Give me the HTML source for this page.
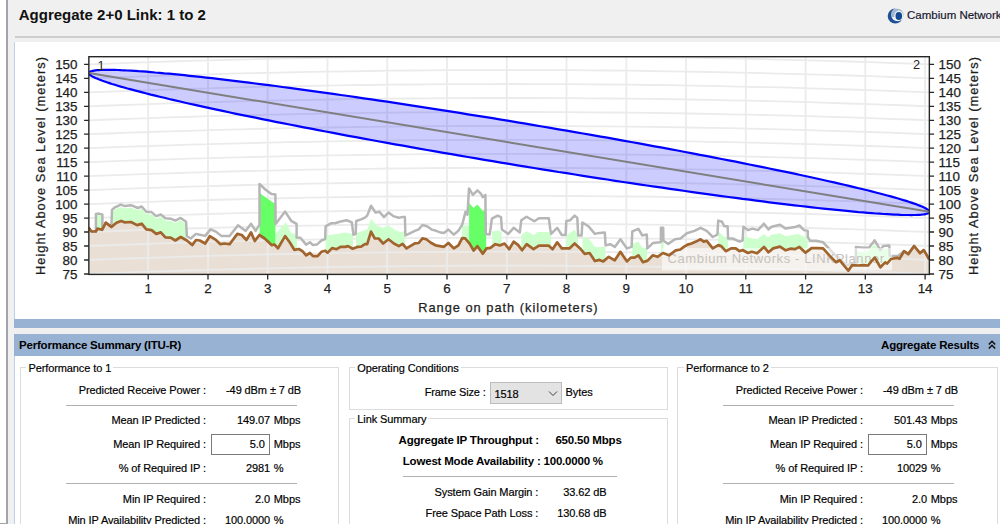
<!DOCTYPE html>
<html><head><meta charset="utf-8"><style>
html,body{margin:0;padding:0;}
body{width:1000px;height:524px;overflow:hidden;position:relative;background:#f0f0f0;font-family:"Liberation Sans",sans-serif;color:#000;}
.t{position:absolute;white-space:pre;-webkit-text-stroke:0.18px #000;}
</style></head><body>
<div style="position:absolute;left:0.00px;top:0.00px;width:6.00px;height:524.00px;background:#ffffff"></div>
<div style="position:absolute;left:6.00px;top:0.00px;width:2.00px;height:524.00px;background:#a3a3ab"></div>
<div style="position:absolute;left:0.00px;top:522.50px;width:6.00px;height:1.50px;background:#a3a3ab"></div>
<div class="t" style="top:6.90px;font-size:15px;line-height:15px;font-weight:700;-webkit-text-stroke:0;color:#111;left:18.75px;">Aggregate 2+0 Link: 1 to 2</div>
<div style="position:absolute;left:15.00px;top:35.80px;width:985.00px;height:2.00px;background:#cdcdcd"></div>
<svg width="24" height="24" viewBox="0 0 24 24" style="position:absolute;left:884px;top:4px"><defs><mask id="cmk"><rect x="0" y="0" width="24" height="24" fill="#fff"/><circle cx="13.6" cy="10.6" r="6.6" fill="#000"/></mask><mask id="cmk2"><rect x="0" y="0" width="24" height="24" fill="#fff"/><ellipse cx="14.8" cy="12" rx="4.6" ry="5.4" fill="#000"/><rect x="0" y="13" width="24" height="11" fill="#000"/></mask></defs><circle cx="13.3" cy="10.9" r="6.2" fill="#9fb3d3" mask="url(#cmk2)"/><circle cx="11.3" cy="12" r="7.6" fill="#1f4f95" mask="url(#cmk)"/><ellipse cx="14.8" cy="12" rx="3.3" ry="4" fill="#134a92"/></svg>
<div class="t" style="top:9.57px;font-size:11.5px;line-height:11.5px;color:#1c1c3c;left:907.00px;">Cambium Networks</div>
<div style="position:absolute;left:14.00px;top:42.00px;width:986.00px;height:277.40px;background:#ffffff"></div>
<div style="position:absolute;left:14.00px;top:42.00px;width:1.00px;height:277.40px;background:#bcd0e8"></div>
<svg width="1000" height="524" viewBox="0 0 1000 524" style="position:absolute;left:0;top:0">
<defs><clipPath id="plot"><rect x="88.85" y="56.7" width="840.55" height="217.7"/></clipPath>
<clipPath id="above"><polygon points="88.5,0.0 929.3,0.0 929.3,259.5 923.8,250.1 920.0,253.1 914.1,246.0 908.3,254.1 904.0,251.2 899.6,258.8 897.0,257.9 891.0,259.0 887.2,263.5 885.2,262.4 880.4,267.3 874.8,257.8 871.9,260.6 868.1,265.5 863.5,265.2 858.2,265.5 852.1,265.2 848.3,270.6 843.7,265.2 839.9,260.3 836.1,262.2 830.0,256.1 823.1,248.4 817.7,248.1 811.6,248.1 805.5,252.7 799.4,246.9 794.8,249.2 790.3,248.7 785.7,250.3 780.0,246.6 773.1,248.4 768.5,252.3 764.0,246.9 757.1,253.3 751.8,251.8 747.9,253.0 742.6,250.0 739.5,251.2 735.7,248.4 731.1,248.4 725.8,251.2 721.2,246.1 718.2,245.1 712.8,248.4 706.7,240.8 703.7,241.6 700.6,239.3 696.0,241.6 691.5,243.5 687.6,244.6 683.8,246.9 680.4,249.5 675.8,250.3 669.0,255.3 662.9,253.0 657.5,256.8 652.9,255.3 647.6,260.6 643.0,262.2 638.4,255.3 634.6,257.6 630.8,257.6 627.0,261.4 620.4,251.8 614.8,260.3 608.7,256.8 603.3,261.4 599.5,259.9 594.9,261.0 589.6,253.0 584.7,253.8 580.1,248.4 574.7,243.5 569.4,248.4 561.8,248.4 557.2,242.3 552.6,249.2 548.8,245.7 538.9,245.7 533.5,249.2 526.6,244.2 522.1,250.3 518.2,245.1 513.7,241.6 509.1,249.2 504.5,243.5 499.9,245.4 495.3,244.2 490.4,247.8 486.6,248.4 482.8,253.7 477.4,246.1 473.6,250.6 469.8,243.8 465.2,238.4 462.2,238.1 458.4,245.3 453.8,248.4 448.4,243.0 443.9,246.8 440.0,246.1 435.5,245.3 430.9,242.7 426.3,239.2 422.5,238.4 418.7,243.0 414.8,243.3 410.3,246.1 406.5,248.4 402.6,243.8 398.8,246.1 393.9,243.5 388.5,239.3 383.2,243.5 378.6,238.5 374.8,238.5 371.0,231.6 367.2,244.2 364.9,244.2 361.1,246.6 357.3,246.9 352.7,248.7 348.1,246.1 345.0,246.9 340.5,246.9 336.6,249.2 332.1,248.1 327.5,252.7 325.2,250.7 321.4,251.8 317.6,256.1 313.0,256.1 309.9,253.0 306.1,255.3 302.7,251.3 298.9,249.0 294.3,249.8 289.7,242.2 285.1,236.1 278.0,248.3 274.4,244.5 271.6,245.1 264.7,238.5 259.4,235.0 254.8,241.0 251.0,232.4 246.4,240.0 241.8,235.0 237.3,233.9 229.6,244.2 224.3,243.5 220.5,244.2 215.1,239.3 209.8,236.2 205.2,243.5 199.8,240.5 196.0,240.0 192.2,245.1 186.9,240.5 180.7,237.0 175.3,240.5 170.7,237.7 165.4,237.4 160.8,232.4 156.2,233.9 151.6,230.1 146.3,229.4 141.7,223.7 137.1,225.1 131.0,222.0 124.5,222.3 121.1,220.9 116.5,222.8 111.4,226.9 105.8,222.7 102.0,229.8 97.5,228.6 95.9,231.5 91.3,231.3 88.5,227.5"/></clipPath></defs>
<g clip-path="url(#plot)">
<polygon fill="#e9dfd5" points="88.5,227.5 91.3,231.3 95.9,231.5 97.5,228.6 102.0,229.8 105.8,222.7 111.4,226.9 116.5,222.8 121.1,220.9 124.5,222.3 131.0,222.0 137.1,225.1 141.7,223.7 146.3,229.4 151.6,230.1 156.2,233.9 160.8,232.4 165.4,237.4 170.7,237.7 175.3,240.5 180.7,237.0 186.9,240.5 192.2,245.1 196.0,240.0 199.8,240.5 205.2,243.5 209.8,236.2 215.1,239.3 220.5,244.2 224.3,243.5 229.6,244.2 237.3,233.9 241.8,235.0 246.4,240.0 251.0,232.4 254.8,241.0 259.4,235.0 264.7,238.5 271.6,245.1 274.4,244.5 278.0,248.3 285.1,236.1 289.7,242.2 294.3,249.8 298.9,249.0 302.7,251.3 306.1,255.3 309.9,253.0 313.0,256.1 317.6,256.1 321.4,251.8 325.2,250.7 327.5,252.7 332.1,248.1 336.6,249.2 340.5,246.9 345.0,246.9 348.1,246.1 352.7,248.7 357.3,246.9 361.1,246.6 364.9,244.2 367.2,244.2 371.0,231.6 374.8,238.5 378.6,238.5 383.2,243.5 388.5,239.3 393.9,243.5 398.8,246.1 402.6,243.8 406.5,248.4 410.3,246.1 414.8,243.3 418.7,243.0 422.5,238.4 426.3,239.2 430.9,242.7 435.5,245.3 440.0,246.1 443.9,246.8 448.4,243.0 453.8,248.4 458.4,245.3 462.2,238.1 465.2,238.4 469.8,243.8 473.6,250.6 477.4,246.1 482.8,253.7 486.6,248.4 490.4,247.8 495.3,244.2 499.9,245.4 504.5,243.5 509.1,249.2 513.7,241.6 518.2,245.1 522.1,250.3 526.6,244.2 533.5,249.2 538.9,245.7 548.8,245.7 552.6,249.2 557.2,242.3 561.8,248.4 569.4,248.4 574.7,243.5 580.1,248.4 584.7,253.8 589.6,253.0 594.9,261.0 599.5,259.9 603.3,261.4 608.7,256.8 614.8,260.3 620.4,251.8 627.0,261.4 630.8,257.6 634.6,257.6 638.4,255.3 643.0,262.2 647.6,260.6 652.9,255.3 657.5,256.8 662.9,253.0 669.0,255.3 675.8,250.3 680.4,249.5 683.8,246.9 687.6,244.6 691.5,243.5 696.0,241.6 700.6,239.3 703.7,241.6 706.7,240.8 712.8,248.4 718.2,245.1 721.2,246.1 725.8,251.2 731.1,248.4 735.7,248.4 739.5,251.2 742.6,250.0 747.9,253.0 751.8,251.8 757.1,253.3 764.0,246.9 768.5,252.3 773.1,248.4 780.0,246.6 785.7,250.3 790.3,248.7 794.8,249.2 799.4,246.9 805.5,252.7 811.6,248.1 817.7,248.1 823.1,248.4 830.0,256.1 836.1,262.2 839.9,260.3 843.7,265.2 848.3,270.6 852.1,265.2 858.2,265.5 863.5,265.2 868.1,265.5 871.9,260.6 874.8,257.8 880.4,267.3 885.2,262.4 887.2,263.5 891.0,259.0 897.0,257.9 899.6,258.8 904.0,251.2 908.3,254.1 914.1,246.0 920.0,253.1 923.8,250.1 929.3,259.5 929.3,276.0 88.5,276.0"/>
<path d="M148.2,56V274 M208.0,56V274 M267.7,56V274 M327.5,56V274 M387.2,56V274 M447.0,56V274 M506.8,56V274 M566.5,56V274 M626.3,56V274 M686.0,56V274 M745.8,56V274 M805.6,56V274 M865.3,56V274 M925.1,56V274 M88.8,273.9 L108.9,273.2 L128.9,272.4 L148.9,271.7 L168.9,271.1 L188.9,270.5 L208.9,269.9 L228.9,269.3 L249.0,268.8 L269.0,268.4 L289.0,267.9 L309.0,267.5 L329.0,267.2 L349.0,266.9 L369.0,266.6 L389.0,266.3 L409.1,266.1 L429.1,265.9 L449.1,265.8 L469.1,265.7 L489.1,265.7 L509.1,265.7 L529.1,265.7 L549.2,265.7 L569.2,265.8 L589.2,266.0 L609.2,266.1 L629.2,266.3 L649.2,266.6 L669.2,266.9 L689.2,267.2 L709.3,267.5 L729.3,267.9 L749.3,268.4 L769.3,268.8 L789.3,269.3 L809.3,269.9 L829.3,270.5 L849.3,271.1 L869.4,271.7 L889.4,272.4 L909.4,273.2 L929.4,274.0 M88.8,260.0 L108.9,259.2 L128.9,258.5 L148.9,257.8 L168.9,257.1 L188.9,256.5 L208.9,255.9 L228.9,255.4 L249.0,254.9 L269.0,254.4 L289.0,254.0 L309.0,253.6 L329.0,253.2 L349.0,252.9 L369.0,252.6 L389.0,252.4 L409.1,252.1 L429.1,252.0 L449.1,251.8 L469.1,251.8 L489.1,251.7 L509.1,251.7 L529.1,251.7 L549.2,251.8 L569.2,251.9 L589.2,252.0 L609.2,252.2 L629.2,252.4 L649.2,252.6 L669.2,252.9 L689.2,253.2 L709.3,253.6 L729.3,254.0 L749.3,254.4 L769.3,254.9 L789.3,255.4 L809.3,255.9 L829.3,256.5 L849.3,257.1 L869.4,257.8 L889.4,258.5 L909.4,259.2 L929.4,260.0 M88.8,246.0 L108.9,245.2 L128.9,244.5 L148.9,243.8 L168.9,243.1 L188.9,242.5 L208.9,241.9 L228.9,241.4 L249.0,240.9 L269.0,240.4 L289.0,240.0 L309.0,239.6 L329.0,239.2 L349.0,238.9 L369.0,238.6 L389.0,238.4 L409.1,238.2 L429.1,238.0 L449.1,237.9 L469.1,237.8 L489.1,237.7 L509.1,237.7 L529.1,237.7 L549.2,237.8 L569.2,237.9 L589.2,238.0 L609.2,238.2 L629.2,238.4 L649.2,238.6 L669.2,238.9 L689.2,239.2 L709.3,239.6 L729.3,240.0 L749.3,240.4 L769.3,240.9 L789.3,241.4 L809.3,241.9 L829.3,242.5 L849.3,243.2 L869.4,243.8 L889.4,244.5 L909.4,245.2 L929.4,246.0 M88.8,232.0 L108.9,231.3 L128.9,230.5 L148.9,229.8 L168.9,229.2 L188.9,228.5 L208.9,228.0 L228.9,227.4 L249.0,226.9 L269.0,226.4 L289.0,226.0 L309.0,225.6 L329.0,225.3 L349.0,224.9 L369.0,224.7 L389.0,224.4 L409.1,224.2 L429.1,224.0 L449.1,223.9 L469.1,223.8 L489.1,223.8 L509.1,223.7 L529.1,223.8 L549.2,223.8 L569.2,223.9 L589.2,224.0 L609.2,224.2 L629.2,224.4 L649.2,224.7 L669.2,224.9 L689.2,225.3 L709.3,225.6 L729.3,226.0 L749.3,226.5 L769.3,226.9 L789.3,227.4 L809.3,228.0 L829.3,228.6 L849.3,229.2 L869.4,229.8 L889.4,230.5 L909.4,231.3 L929.4,232.0 M88.8,218.1 L108.9,217.3 L128.9,216.6 L148.9,215.9 L168.9,215.2 L188.9,214.6 L208.9,214.0 L228.9,213.4 L249.0,212.9 L269.0,212.5 L289.0,212.0 L309.0,211.6 L329.0,211.3 L349.0,211.0 L369.0,210.7 L389.0,210.4 L409.1,210.2 L429.1,210.1 L449.1,209.9 L469.1,209.8 L489.1,209.8 L509.1,209.8 L529.1,209.8 L549.2,209.8 L569.2,209.9 L589.2,210.1 L609.2,210.2 L629.2,210.4 L649.2,210.7 L669.2,211.0 L689.2,211.3 L709.3,211.7 L729.3,212.0 L749.3,212.5 L769.3,213.0 L789.3,213.5 L809.3,214.0 L829.3,214.6 L849.3,215.2 L869.4,215.9 L889.4,216.6 L909.4,217.3 L929.4,218.1 M88.8,204.1 L108.9,203.3 L128.9,202.6 L148.9,201.9 L168.9,201.2 L188.9,200.6 L208.9,200.0 L228.9,199.5 L249.0,199.0 L269.0,198.5 L289.0,198.1 L309.0,197.7 L329.0,197.3 L349.0,197.0 L369.0,196.7 L389.0,196.5 L409.1,196.3 L429.1,196.1 L449.1,196.0 L469.1,195.9 L489.1,195.8 L509.1,195.8 L529.1,195.8 L549.2,195.9 L569.2,196.0 L589.2,196.1 L609.2,196.3 L629.2,196.5 L649.2,196.7 L669.2,197.0 L689.2,197.3 L709.3,197.7 L729.3,198.1 L749.3,198.5 L769.3,199.0 L789.3,199.5 L809.3,200.0 L829.3,200.6 L849.3,201.2 L869.4,201.9 L889.4,202.6 L909.4,203.3 L929.4,204.1 M88.8,190.1 L108.9,189.3 L128.9,188.6 L148.9,187.9 L168.9,187.3 L188.9,186.6 L208.9,186.1 L228.9,185.5 L249.0,185.0 L269.0,184.5 L289.0,184.1 L309.0,183.7 L329.0,183.3 L349.0,183.0 L369.0,182.7 L389.0,182.5 L409.1,182.3 L429.1,182.1 L449.1,182.0 L469.1,181.9 L489.1,181.8 L509.1,181.8 L529.1,181.8 L549.2,181.9 L569.2,182.0 L589.2,182.1 L609.2,182.3 L629.2,182.5 L649.2,182.8 L669.2,183.0 L689.2,183.4 L709.3,183.7 L729.3,184.1 L749.3,184.5 L769.3,185.0 L789.3,185.5 L809.3,186.1 L829.3,186.6 L849.3,187.3 L869.4,187.9 L889.4,188.6 L909.4,189.4 L929.4,190.1 M88.8,176.1 L108.9,175.4 L128.9,174.6 L148.9,173.9 L168.9,173.3 L188.9,172.7 L208.9,172.1 L228.9,171.5 L249.0,171.0 L269.0,170.6 L289.0,170.1 L309.0,169.7 L329.0,169.4 L349.0,169.1 L369.0,168.8 L389.0,168.5 L409.1,168.3 L429.1,168.2 L449.1,168.0 L469.1,167.9 L489.1,167.9 L509.1,167.9 L529.1,167.9 L549.2,167.9 L569.2,168.0 L589.2,168.2 L609.2,168.3 L629.2,168.5 L649.2,168.8 L669.2,169.1 L689.2,169.4 L709.3,169.7 L729.3,170.1 L749.3,170.6 L769.3,171.0 L789.3,171.6 L809.3,172.1 L829.3,172.7 L849.3,173.3 L869.4,174.0 L889.4,174.7 L909.4,175.4 L929.4,176.2 M88.8,162.2 L108.9,161.4 L128.9,160.7 L148.9,160.0 L168.9,159.3 L188.9,158.7 L208.9,158.1 L228.9,157.6 L249.0,157.1 L269.0,156.6 L289.0,156.2 L309.0,155.8 L329.0,155.4 L349.0,155.1 L369.0,154.8 L389.0,154.6 L409.1,154.4 L429.1,154.2 L449.1,154.1 L469.1,154.0 L489.1,153.9 L509.1,153.9 L529.1,153.9 L549.2,154.0 L569.2,154.1 L589.2,154.2 L609.2,154.4 L629.2,154.6 L649.2,154.8 L669.2,155.1 L689.2,155.4 L709.3,155.8 L729.3,156.2 L749.3,156.6 L769.3,157.1 L789.3,157.6 L809.3,158.1 L829.3,158.7 L849.3,159.3 L869.4,160.0 L889.4,160.7 L909.4,161.4 L929.4,162.2 M88.8,148.2 L108.9,147.4 L128.9,146.7 L148.9,146.0 L168.9,145.3 L188.9,144.7 L208.9,144.1 L228.9,143.6 L249.0,143.1 L269.0,142.6 L289.0,142.2 L309.0,141.8 L329.0,141.4 L349.0,141.1 L369.0,140.8 L389.0,140.6 L409.1,140.4 L429.1,140.2 L449.1,140.1 L469.1,140.0 L489.1,139.9 L509.1,139.9 L529.1,139.9 L549.2,140.0 L569.2,140.1 L589.2,140.2 L609.2,140.4 L629.2,140.6 L649.2,140.8 L669.2,141.1 L689.2,141.4 L709.3,141.8 L729.3,142.2 L749.3,142.6 L769.3,143.1 L789.3,143.6 L809.3,144.2 L829.3,144.7 L849.3,145.4 L869.4,146.0 L889.4,146.7 L909.4,147.4 L929.4,148.2 M88.8,134.2 L108.9,133.5 L128.9,132.7 L148.9,132.0 L168.9,131.4 L188.9,130.8 L208.9,130.2 L228.9,129.6 L249.0,129.1 L269.0,128.7 L289.0,128.2 L309.0,127.8 L329.0,127.5 L349.0,127.2 L369.0,126.9 L389.0,126.6 L409.1,126.4 L429.1,126.2 L449.1,126.1 L469.1,126.0 L489.1,126.0 L509.1,126.0 L529.1,126.0 L549.2,126.0 L569.2,126.1 L589.2,126.3 L609.2,126.4 L629.2,126.6 L649.2,126.9 L669.2,127.2 L689.2,127.5 L709.3,127.8 L729.3,128.2 L749.3,128.7 L769.3,129.1 L789.3,129.6 L809.3,130.2 L829.3,130.8 L849.3,131.4 L869.4,132.0 L889.4,132.7 L909.4,133.5 L929.4,134.2 M88.8,120.3 L108.9,119.5 L128.9,118.8 L148.9,118.1 L168.9,117.4 L188.9,116.8 L208.9,116.2 L228.9,115.7 L249.0,115.2 L269.0,114.7 L289.0,114.3 L309.0,113.9 L329.0,113.5 L349.0,113.2 L369.0,112.9 L389.0,112.7 L409.1,112.4 L429.1,112.3 L449.1,112.1 L469.1,112.1 L489.1,112.0 L509.1,112.0 L529.1,112.0 L549.2,112.1 L569.2,112.2 L589.2,112.3 L609.2,112.5 L629.2,112.7 L649.2,112.9 L669.2,113.2 L689.2,113.5 L709.3,113.9 L729.3,114.3 L749.3,114.7 L769.3,115.2 L789.3,115.7 L809.3,116.2 L829.3,116.8 L849.3,117.4 L869.4,118.1 L889.4,118.8 L909.4,119.5 L929.4,120.3 M88.8,106.3 L108.9,105.5 L128.9,104.8 L148.9,104.1 L168.9,103.4 L188.9,102.8 L208.9,102.2 L228.9,101.7 L249.0,101.2 L269.0,100.7 L289.0,100.3 L309.0,99.9 L329.0,99.5 L349.0,99.2 L369.0,98.9 L389.0,98.7 L409.1,98.5 L429.1,98.3 L449.1,98.2 L469.1,98.1 L489.1,98.0 L509.1,98.0 L529.1,98.0 L549.2,98.1 L569.2,98.2 L589.2,98.3 L609.2,98.5 L629.2,98.7 L649.2,98.9 L669.2,99.2 L689.2,99.5 L709.3,99.9 L729.3,100.3 L749.3,100.7 L769.3,101.2 L789.3,101.7 L809.3,102.2 L829.3,102.8 L849.3,103.5 L869.4,104.1 L889.4,104.8 L909.4,105.5 L929.4,106.3 M88.8,92.3 L108.9,91.6 L128.9,90.8 L148.9,90.1 L168.9,89.5 L188.9,88.8 L208.9,88.3 L228.9,87.7 L249.0,87.2 L269.0,86.7 L289.0,86.3 L309.0,85.9 L329.0,85.6 L349.0,85.2 L369.0,85.0 L389.0,84.7 L409.1,84.5 L429.1,84.3 L449.1,84.2 L469.1,84.1 L489.1,84.1 L509.1,84.0 L529.1,84.1 L549.2,84.1 L569.2,84.2 L589.2,84.3 L609.2,84.5 L629.2,84.7 L649.2,85.0 L669.2,85.2 L689.2,85.6 L709.3,85.9 L729.3,86.3 L749.3,86.8 L769.3,87.2 L789.3,87.7 L809.3,88.3 L829.3,88.9 L849.3,89.5 L869.4,90.1 L889.4,90.8 L909.4,91.6 L929.4,92.3 M88.8,78.4 L108.9,77.6 L128.9,76.9 L148.9,76.2 L168.9,75.5 L188.9,74.9 L208.9,74.3 L228.9,73.7 L249.0,73.2 L269.0,72.8 L289.0,72.3 L309.0,71.9 L329.0,71.6 L349.0,71.3 L369.0,71.0 L389.0,70.7 L409.1,70.5 L429.1,70.4 L449.1,70.2 L469.1,70.1 L489.1,70.1 L509.1,70.1 L529.1,70.1 L549.2,70.1 L569.2,70.2 L589.2,70.4 L609.2,70.5 L629.2,70.7 L649.2,71.0 L669.2,71.3 L689.2,71.6 L709.3,72.0 L729.3,72.3 L749.3,72.8 L769.3,73.3 L789.3,73.8 L809.3,74.3 L829.3,74.9 L849.3,75.5 L869.4,76.2 L889.4,76.9 L909.4,77.6 L929.4,78.4 M88.8,64.4 L108.9,63.6 L128.9,62.9 L148.9,62.2 L168.9,61.5 L188.9,60.9 L208.9,60.3 L228.9,59.8 L249.0,59.3 L269.0,58.8 L289.0,58.4 L309.0,58.0 L329.0,57.6 L349.0,57.3 L369.0,57.0 L389.0,56.8 L409.1,56.6 L429.1,56.4 L449.1,56.3 L469.1,56.2 L489.1,56.1 L509.1,56.1 L529.1,56.1 L549.2,56.2 L569.2,56.3 L589.2,56.4 L609.2,56.6 L629.2,56.8 L649.2,57.0 L669.2,57.3 L689.2,57.6 L709.3,58.0 L729.3,58.4 L749.3,58.8 L769.3,59.3 L789.3,59.8 L809.3,60.3 L829.3,60.9 L849.3,61.5 L869.4,62.2 L889.4,62.9 L909.4,63.6 L929.4,64.4 M88.8,50.4 L108.9,49.6 L128.9,48.9 L148.9,48.2 L168.9,47.6 L188.9,46.9 L208.9,46.4 L228.9,45.8 L249.0,45.3 L269.0,44.8 L289.0,44.4 L309.0,44.0 L329.0,43.6 L349.0,43.3 L369.0,43.0 L389.0,42.8 L409.1,42.6 L429.1,42.4 L449.1,42.3 L469.1,42.2 L489.1,42.1 L509.1,42.1 L529.1,42.1 L549.2,42.2 L569.2,42.3 L589.2,42.4 L609.2,42.6 L629.2,42.8 L649.2,43.1 L669.2,43.3 L689.2,43.7 L709.3,44.0 L729.3,44.4 L749.3,44.8 L769.3,45.3 L789.3,45.8 L809.3,46.4 L829.3,46.9 L849.3,47.6 L869.4,48.2 L889.4,48.9 L909.4,49.7 L929.4,50.4" fill="none" stroke="#ebebeb" stroke-width="1.8"/>
<g clip-path="url(#above)">
<polygon fill="#ccffcc" points="95.9,214.9 98.6,214.6 102.4,215.5 102.4,275.0 95.9,275.0"/>
<polygon fill="#ccffcc" points="112.3,211.9 115.0,209.6 120.7,206.9 124.9,208.4 131.0,207.5 137.9,210.3 141.7,208.8 146.3,214.1 151.6,214.4 156.2,218.4 160.8,216.8 165.4,220.5 170.7,221.0 175.3,222.9 180.7,220.2 186.0,223.9 186.0,275.0 112.3,275.0"/>
<polygon fill="#ccffcc" points="275.6,233.8 285.9,222.3 291.2,233.0 297.0,234.5 297.0,275.0 275.6,275.0"/>
<polygon fill="#ccffcc" points="325.6,236.0 331.3,234.7 345.8,232.4 353.0,233.9 353.0,275.0 325.6,275.0"/>
<polygon fill="#ccffcc" points="355.9,233.2 367.2,229.4 371.0,218.7 376.3,225.5 383.2,227.8 388.5,225.5 395.0,230.0 401.1,232.3 405.2,230.5 405.2,275.0 355.9,275.0"/>
<polygon fill="#ccffcc" points="462.0,225.5 469.0,225.5 469.0,275.0 462.0,275.0"/>
<polygon fill="#ccffcc" points="492.1,231.6 499.2,230.4 501.7,232.4 501.7,275.0 492.1,275.0"/>
<polygon fill="#ccffcc" points="521.3,235.0 526.6,231.3 534.3,235.0 537.3,232.1 548.8,232.1 551.1,235.5 551.1,275.0 521.3,275.0"/>
<polygon fill="#ccffcc" points="566.3,235.5 574.7,229.8 578.0,235.5 578.0,275.0 566.3,275.0"/>
<polygon fill="#ccffcc" points="582.6,237.0 589.6,239.6 594.9,246.9 605.4,246.9 605.4,275.0 582.6,275.0"/>
<polygon fill="#ccffcc" points="632.3,243.9 638.4,241.6 642.3,247.7 647.2,247.7 647.2,275.0 632.3,275.0"/>
<polygon fill="#ccffcc" points="661.0,239.6 663.6,240.8 663.6,275.0 661.0,275.0"/>
<polygon fill="#ccffcc" points="718.4,231.3 724.3,237.0 728.0,237.0 728.0,275.0 718.4,275.0"/>
<polygon fill="#ccffcc" points="743.4,236.5 757.1,239.3 764.0,233.9 767.8,237.7 771.6,234.7 780.0,233.2 785.7,236.2 797.9,233.9 807.6,237.7 807.6,275.0 743.4,275.0"/>
<polygon fill="#ccffcc" points="856.0,251.5 866.6,252.3 872.7,246.1 875.0,245.4 880.3,252.0 883.3,249.0 889.5,249.0 889.5,275.0 856.0,275.0"/>
<polygon fill="#66ff66" points="259.6,193.0 272.9,202.5 275.4,203.2 275.4,275.0 259.6,275.0"/>
<polygon fill="#66ff66" points="469.1,203.0 473.6,207.9 477.4,204.5 482.8,211.0 486.2,209.4 486.2,275.0 469.1,275.0"/>
</g>
<polyline fill="none" stroke="#b6b6b6" stroke-width="2.5" stroke-linejoin="round" points="88.5,227.5 91.3,231.3 95.9,231.5 95.9,214.1 98.6,213.6 102.4,214.4 102.4,229.8 105.8,222.7 111.4,226.9 112.0,209.9 115.0,207.3 120.7,204.6 124.9,206.1 131.0,205.2 137.9,208.0 141.7,206.5 146.3,211.8 151.6,212.1 156.2,216.1 160.8,214.5 165.4,218.2 170.7,218.7 175.3,220.6 180.7,217.9 186.1,221.7 186.9,236.2 190.7,238.5 196.0,233.9 199.8,234.7 205.2,235.9 210.5,229.4 215.9,231.6 221.2,235.9 229.6,235.9 238.0,225.2 245.6,230.9 251.0,223.7 255.6,230.9 259.5,224.8 259.5,183.9 265.3,189.5 271.4,194.1 275.4,194.5 275.6,223.9 285.1,211.6 291.2,220.8 296.6,223.9 296.6,237.6 300.4,237.7 306.1,244.6 309.9,242.3 313.0,245.1 316.8,244.6 321.4,240.5 325.2,239.0 325.6,226.3 331.3,223.2 335.1,223.2 339.7,221.7 346.6,220.2 351.9,222.5 353.4,234.7 355.7,233.9 356.2,221.0 361.1,219.4 364.9,217.6 367.2,215.6 371.0,205.7 375.6,212.6 379.4,211.8 384.0,217.1 388.5,212.6 393.9,216.4 398.8,217.8 401.9,217.1 404.9,217.1 405.4,235.4 410.3,233.1 414.8,230.8 418.7,229.3 422.5,225.0 427.1,226.2 431.6,229.6 436.2,230.8 440.8,232.6 443.9,233.1 448.4,229.6 453.8,234.6 458.4,230.8 462.2,224.7 465.5,211.7 467.5,214.8 469.0,188.4 472.9,194.9 477.4,190.3 481.3,194.2 482.8,197.2 485.4,194.9 485.8,233.9 489.7,234.6 491.9,218.6 497.6,215.6 501.0,217.1 501.9,229.4 508.3,233.9 513.7,227.8 519.8,232.4 521.3,220.2 526.6,216.7 534.3,221.3 538.9,218.2 548.8,218.2 550.3,229.4 551.1,233.9 557.2,227.8 561.8,235.0 565.6,235.0 566.3,221.0 570.2,220.2 574.7,215.6 577.3,217.9 578.2,235.5 581.6,235.5 582.4,222.5 588.4,226.3 594.9,233.9 599.5,232.9 604.8,232.4 605.6,245.4 610.2,244.2 614.8,246.9 620.4,239.3 627.0,248.4 631.6,246.9 632.3,231.3 638.4,228.9 642.3,235.5 646.8,234.4 647.3,248.4 652.9,243.1 659.8,242.3 660.9,242.0 660.9,227.8 663.2,227.8 663.4,240.8 668.2,243.9 675.1,239.3 680.4,238.5 686.9,233.2 694.5,230.9 700.6,227.8 706.7,230.9 712.8,237.0 717.4,234.7 718.2,220.6 722.0,221.7 724.3,226.3 727.6,226.3 728.1,238.5 732.7,238.5 739.5,241.6 742.6,240.5 743.4,226.8 747.9,230.1 752.5,228.6 757.9,230.1 764.0,223.7 768.5,229.4 771.6,226.8 780.0,224.8 785.7,228.6 790.3,227.8 794.8,227.1 799.4,225.5 804.0,230.1 807.8,230.9 807.8,237.0 810.1,240.8 816.2,240.8 823.1,242.3 836.1,256.1 846.8,265.2 851.3,263.7 855.9,263.7 855.9,246.9 863.5,247.7 868.9,247.7 874.7,240.3 880.3,250.2 883.3,245.9 889.3,245.5 889.7,256.0 898.0,256.0 904.0,251.2 908.3,254.1 914.1,246.0 920.0,253.1 923.8,250.1 929.3,259.5"/>
<rect x="662" y="248" width="230" height="22.4" fill="#ffffff" fill-opacity="0.55"/>
<text x="667.5" y="262.8" font-family="Liberation Sans" font-size="13" letter-spacing="0.62" fill="#c6c2be">Cambium Networks - LINKPlanner</text>
<polygon points="88.8,73.1 88.9,72.7 89.2,72.3 89.6,72.0 90.1,71.6 90.9,71.3 91.8,71.1 92.8,70.8 94.0,70.6 95.4,70.4 96.9,70.2 98.6,70.1 100.5,70.0 102.5,69.9 104.6,69.9 106.9,69.8 109.4,69.9 112.0,69.9 114.8,69.9 117.8,70.0 120.8,70.2 124.1,70.3 127.5,70.5 131.0,70.7 134.7,70.9 138.5,71.2 142.4,71.4 146.5,71.7 150.8,72.1 155.2,72.5 159.7,72.8 164.3,73.3 169.1,73.7 174.0,74.2 179.1,74.7 184.2,75.2 189.5,75.8 195.0,76.3 200.5,76.9 206.2,77.6 211.9,78.2 217.8,78.9 223.8,79.6 230.0,80.3 236.2,81.1 242.5,81.8 248.9,82.6 255.5,83.5 262.1,84.3 268.8,85.2 275.6,86.0 282.5,87.0 289.5,87.9 296.6,88.8 303.8,89.8 311.0,90.8 318.3,91.8 325.7,92.8 333.2,93.9 340.7,95.0 348.3,96.0 355.9,97.2 363.7,98.3 371.4,99.4 379.3,100.6 387.1,101.7 395.0,102.9 403.0,104.1 411.0,105.4 419.1,106.6 427.1,107.8 435.2,109.1 443.4,110.4 451.5,111.7 459.7,112.9 467.9,114.3 476.2,115.6 484.4,116.9 492.6,118.2 500.9,119.6 509.1,120.9 517.4,122.3 525.6,123.7 533.9,125.1 542.1,126.5 550.3,127.9 558.5,129.3 566.7,130.7 574.9,132.1 583.0,133.5 591.1,134.9 599.2,136.3 607.2,137.7 615.2,139.2 623.2,140.6 631.1,142.0 639.0,143.4 646.8,144.9 654.6,146.3 662.3,147.7 670.0,149.1 677.5,150.5 685.1,152.0 692.5,153.4 699.9,154.8 707.2,156.2 714.5,157.6 721.6,159.0 728.7,160.4 735.7,161.7 742.6,163.1 749.4,164.5 756.2,165.8 762.8,167.2 769.3,168.5 775.7,169.8 782.1,171.1 788.3,172.4 794.4,173.7 800.4,175.0 806.3,176.3 812.1,177.5 817.7,178.8 823.3,180.0 828.7,181.2 834.0,182.4 839.2,183.6 844.2,184.8 849.1,185.9 853.9,187.1 858.6,188.2 863.1,189.3 867.5,190.3 871.7,191.4 875.8,192.5 879.8,193.5 883.6,194.5 887.3,195.5 890.8,196.4 894.2,197.4 897.4,198.3 900.5,199.2 903.4,200.1 906.2,200.9 908.8,201.8 911.3,202.6 913.6,203.4 915.8,204.1 917.8,204.9 919.6,205.6 921.3,206.3 922.9,206.9 924.2,207.6 925.4,208.2 926.5,208.8 927.4,209.4 928.1,209.9 928.7,210.4 929.1,210.9 929.3,211.4 929.4,211.8 929.4,211.8 929.3,212.2 929.1,212.6 928.7,212.9 928.1,213.3 927.4,213.6 926.5,213.8 925.4,214.1 924.2,214.3 922.9,214.5 921.3,214.7 919.6,214.8 917.8,214.9 915.8,215.0 913.6,215.0 911.3,215.1 908.8,215.0 906.2,215.0 903.4,215.0 900.5,214.9 897.4,214.7 894.2,214.6 890.8,214.4 887.3,214.2 883.6,214.0 879.8,213.7 875.8,213.5 871.7,213.2 867.5,212.8 863.1,212.4 858.6,212.1 853.9,211.6 849.1,211.2 844.2,210.7 839.2,210.2 834.0,209.7 828.7,209.1 823.3,208.6 817.7,208.0 812.1,207.3 806.3,206.7 800.4,206.0 794.4,205.3 788.3,204.6 782.1,203.8 775.7,203.1 769.3,202.3 762.8,201.4 756.2,200.6 749.4,199.7 742.6,198.9 735.7,197.9 728.7,197.0 721.6,196.1 714.5,195.1 707.2,194.1 699.9,193.1 692.5,192.1 685.1,191.0 677.5,189.9 670.0,188.9 662.3,187.7 654.6,186.6 646.8,185.5 639.0,184.3 631.1,183.2 623.2,182.0 615.2,180.8 607.2,179.5 599.2,178.3 591.1,177.1 583.0,175.8 574.9,174.5 566.7,173.2 558.5,172.0 550.3,170.6 542.1,169.3 533.9,168.0 525.6,166.7 517.4,165.3 509.1,163.9 500.9,162.6 492.6,161.2 484.4,159.8 476.2,158.4 467.9,157.0 459.7,155.6 451.5,154.2 443.4,152.8 435.2,151.4 427.1,150.0 419.1,148.6 411.0,147.2 403.0,145.7 395.0,144.3 387.1,142.9 379.3,141.5 371.4,140.0 363.7,138.6 355.9,137.2 348.3,135.8 340.7,134.4 333.2,132.9 325.7,131.5 318.3,130.1 311.0,128.7 303.8,127.3 296.6,125.9 289.5,124.5 282.5,123.2 275.6,121.8 268.8,120.4 262.1,119.1 255.5,117.7 248.9,116.4 242.5,115.1 236.2,113.8 230.0,112.5 223.8,111.2 217.8,109.9 211.9,108.6 206.2,107.4 200.5,106.1 195.0,104.9 189.5,103.7 184.2,102.5 179.1,101.3 174.0,100.1 169.1,99.0 164.3,97.8 159.7,96.7 155.2,95.6 150.8,94.6 146.5,93.5 142.4,92.4 138.5,91.4 134.7,90.4 131.0,89.4 127.5,88.5 124.1,87.5 120.8,86.6 117.8,85.7 114.8,84.8 112.0,84.0 109.4,83.1 106.9,82.3 104.6,81.5 102.5,80.8 100.5,80.0 98.6,79.3 96.9,78.6 95.4,78.0 94.0,77.3 92.8,76.7 91.8,76.1 90.9,75.5 90.1,75.0 89.6,74.5 89.2,74.0 88.9,73.5 88.8,73.1" fill="#0000ff" fill-opacity="0.2" stroke="#0000ff" stroke-width="2.2" stroke-linejoin="round"/>
<line x1="88.85" y1="73.1" x2="929.4" y2="211.8" stroke="#7f7f7f" stroke-width="2"/>
<polyline fill="none" stroke="#a0642c" stroke-width="2.7" stroke-linejoin="round" points="88.5,227.5 91.3,231.3 95.9,231.5 97.5,228.6 102.0,229.8 105.8,222.7 111.4,226.9 116.5,222.8 121.1,220.9 124.5,222.3 131.0,222.0 137.1,225.1 141.7,223.7 146.3,229.4 151.6,230.1 156.2,233.9 160.8,232.4 165.4,237.4 170.7,237.7 175.3,240.5 180.7,237.0 186.9,240.5 192.2,245.1 196.0,240.0 199.8,240.5 205.2,243.5 209.8,236.2 215.1,239.3 220.5,244.2 224.3,243.5 229.6,244.2 237.3,233.9 241.8,235.0 246.4,240.0 251.0,232.4 254.8,241.0 259.4,235.0 264.7,238.5 271.6,245.1 274.4,244.5 278.0,248.3 285.1,236.1 289.7,242.2 294.3,249.8 298.9,249.0 302.7,251.3 306.1,255.3 309.9,253.0 313.0,256.1 317.6,256.1 321.4,251.8 325.2,250.7 327.5,252.7 332.1,248.1 336.6,249.2 340.5,246.9 345.0,246.9 348.1,246.1 352.7,248.7 357.3,246.9 361.1,246.6 364.9,244.2 367.2,244.2 371.0,231.6 374.8,238.5 378.6,238.5 383.2,243.5 388.5,239.3 393.9,243.5 398.8,246.1 402.6,243.8 406.5,248.4 410.3,246.1 414.8,243.3 418.7,243.0 422.5,238.4 426.3,239.2 430.9,242.7 435.5,245.3 440.0,246.1 443.9,246.8 448.4,243.0 453.8,248.4 458.4,245.3 462.2,238.1 465.2,238.4 469.8,243.8 473.6,250.6 477.4,246.1 482.8,253.7 486.6,248.4 490.4,247.8 495.3,244.2 499.9,245.4 504.5,243.5 509.1,249.2 513.7,241.6 518.2,245.1 522.1,250.3 526.6,244.2 533.5,249.2 538.9,245.7 548.8,245.7 552.6,249.2 557.2,242.3 561.8,248.4 569.4,248.4 574.7,243.5 580.1,248.4 584.7,253.8 589.6,253.0 594.9,261.0 599.5,259.9 603.3,261.4 608.7,256.8 614.8,260.3 620.4,251.8 627.0,261.4 630.8,257.6 634.6,257.6 638.4,255.3 643.0,262.2 647.6,260.6 652.9,255.3 657.5,256.8 662.9,253.0 669.0,255.3 675.8,250.3 680.4,249.5 683.8,246.9 687.6,244.6 691.5,243.5 696.0,241.6 700.6,239.3 703.7,241.6 706.7,240.8 712.8,248.4 718.2,245.1 721.2,246.1 725.8,251.2 731.1,248.4 735.7,248.4 739.5,251.2 742.6,250.0 747.9,253.0 751.8,251.8 757.1,253.3 764.0,246.9 768.5,252.3 773.1,248.4 780.0,246.6 785.7,250.3 790.3,248.7 794.8,249.2 799.4,246.9 805.5,252.7 811.6,248.1 817.7,248.1 823.1,248.4 830.0,256.1 836.1,262.2 839.9,260.3 843.7,265.2 848.3,270.6 852.1,265.2 858.2,265.5 863.5,265.2 868.1,265.5 871.9,260.6 874.8,257.8 880.4,267.3 885.2,262.4 887.2,263.5 891.0,259.0 897.0,257.9 899.6,258.8 904.0,251.2 908.3,254.1 914.1,246.0 920.0,253.1 923.8,250.1 929.3,259.5"/>
</g>
<rect x="88.85" y="56.7" width="840.5" height="217.7" fill="none" stroke="#262626" stroke-width="1.4"/>
<path d="M84.1,274.0H88.85 M929.4,274.0H934.1 M84.1,260.0H88.85 M929.4,260.0H934.1 M84.1,246.0H88.85 M929.4,246.0H934.1 M84.1,232.0H88.85 M929.4,232.0H934.1 M84.1,218.1H88.85 M929.4,218.1H934.1 M84.1,204.1H88.85 M929.4,204.1H934.1 M84.1,190.1H88.85 M929.4,190.1H934.1 M84.1,176.2H88.85 M929.4,176.2H934.1 M84.1,162.2H88.85 M929.4,162.2H934.1 M84.1,148.2H88.85 M929.4,148.2H934.1 M84.1,134.2H88.85 M929.4,134.2H934.1 M84.1,120.3H88.85 M929.4,120.3H934.1 M84.1,106.3H88.85 M929.4,106.3H934.1 M84.1,92.3H88.85 M929.4,92.3H934.1 M84.1,78.4H88.85 M929.4,78.4H934.1 M84.1,64.4H88.85 M929.4,64.4H934.1 M148.2,274.4V279.4 M208.0,274.4V279.4 M267.7,274.4V279.4 M327.5,274.4V279.4 M387.2,274.4V279.4 M447.0,274.4V279.4 M506.8,274.4V279.4 M566.5,274.4V279.4 M626.3,274.4V279.4 M686.0,274.4V279.4 M745.8,274.4V279.4 M805.6,274.4V279.4 M865.3,274.4V279.4 M925.1,274.4V279.4" stroke="#262626" stroke-width="1.3" fill="none"/>
<g font-family="Liberation Sans" font-size="13.4" fill="#1e1e1e" stroke="#1e1e1e" stroke-width="0.25"><text x="77.5" y="279.0" text-anchor="end">75</text><text x="938.5" y="279.0">75</text><text x="77.5" y="265.0" text-anchor="end">80</text><text x="938.5" y="265.0">80</text><text x="77.5" y="251.0" text-anchor="end">85</text><text x="938.5" y="251.0">85</text><text x="77.5" y="237.0" text-anchor="end">90</text><text x="938.5" y="237.0">90</text><text x="77.5" y="223.1" text-anchor="end">95</text><text x="938.5" y="223.1">95</text><text x="77.5" y="209.1" text-anchor="end">100</text><text x="938.5" y="209.1">100</text><text x="77.5" y="195.1" text-anchor="end">105</text><text x="938.5" y="195.1">105</text><text x="77.5" y="181.2" text-anchor="end">110</text><text x="938.5" y="181.2">110</text><text x="77.5" y="167.2" text-anchor="end">115</text><text x="938.5" y="167.2">115</text><text x="77.5" y="153.2" text-anchor="end">120</text><text x="938.5" y="153.2">120</text><text x="77.5" y="139.2" text-anchor="end">125</text><text x="938.5" y="139.2">125</text><text x="77.5" y="125.3" text-anchor="end">130</text><text x="938.5" y="125.3">130</text><text x="77.5" y="111.3" text-anchor="end">135</text><text x="938.5" y="111.3">135</text><text x="77.5" y="97.3" text-anchor="end">140</text><text x="938.5" y="97.3">140</text><text x="77.5" y="83.4" text-anchor="end">145</text><text x="938.5" y="83.4">145</text><text x="77.5" y="69.4" text-anchor="end">150</text><text x="938.5" y="69.4">150</text><text x="148.2" y="293.2" text-anchor="middle">1</text><text x="208.0" y="293.2" text-anchor="middle">2</text><text x="267.7" y="293.2" text-anchor="middle">3</text><text x="327.5" y="293.2" text-anchor="middle">4</text><text x="387.2" y="293.2" text-anchor="middle">5</text><text x="447.0" y="293.2" text-anchor="middle">6</text><text x="506.8" y="293.2" text-anchor="middle">7</text><text x="566.5" y="293.2" text-anchor="middle">8</text><text x="626.3" y="293.2" text-anchor="middle">9</text><text x="686.0" y="293.2" text-anchor="middle">10</text><text x="745.8" y="293.2" text-anchor="middle">11</text><text x="805.6" y="293.2" text-anchor="middle">12</text><text x="865.3" y="293.2" text-anchor="middle">13</text><text x="925.1" y="293.2" text-anchor="middle">14</text></g>
<g font-family="Liberation Sans" font-size="12.8" fill="#1e1e1e" stroke="#1e1e1e" stroke-width="0.25" letter-spacing="1.0">
<text x="508.4" y="311.8" text-anchor="middle">Range on path (kilometers)</text>
<text transform="translate(44.8,165.5) rotate(-90)" text-anchor="middle">Height Above Sea Level (meters)</text>
<text transform="translate(978.1,165.5) rotate(-90)" text-anchor="middle">Height Above Sea Level (meters)</text>
</g>
<g font-family="Liberation Sans" font-size="12.8" fill="#262626"><text x="97.4" y="69.8">1</text><text x="913" y="69">2</text></g>
</svg>
<div style="position:absolute;left:14.00px;top:319.40px;width:986.00px;height:8.60px;background:#98b2d3"></div>
<div style="position:absolute;left:14.00px;top:334.00px;width:986.00px;height:21.60px;background:#98b2d3"></div>
<div style="position:absolute;left:14.00px;top:355.60px;width:986.00px;height:168.40px;background:#ffffff"></div>
<div style="position:absolute;left:14.00px;top:355.60px;width:1.00px;height:168.40px;background:#bcd0e8"></div>
<div class="t" style="top:340.27px;font-size:11.5px;line-height:11.5px;font-weight:700;-webkit-text-stroke:0;letter-spacing:-0.2px;left:19.00px;">Performance Summary (ITU-R)</div>
<div class="t" style="top:340.27px;font-size:11.5px;line-height:11.5px;font-weight:700;-webkit-text-stroke:0;letter-spacing:-0.2px;left:379.30px;width:600px;text-align:right;">Aggregate Results</div>
<svg width="10" height="10" viewBox="0 0 10 10" style="position:absolute;left:987.6px;top:340px"><path d="M0.8,4.5 L4,1.3 L7.2,4.5 M0.8,8.5 L4,5.3 L7.2,8.5" fill="none" stroke="#111" stroke-width="1.6"/></svg>
<div style="position:absolute;left:20.00px;top:367.20px;width:319.00px;height:172.80px;border:1px solid #dcdcdc;box-sizing:border-box;"></div>
<div style="position:absolute;left:348.50px;top:367.20px;width:319.50px;height:43.10px;border:1px solid #dcdcdc;box-sizing:border-box;"></div>
<div style="position:absolute;left:348.50px;top:418.40px;width:319.50px;height:121.60px;border:1px solid #dcdcdc;box-sizing:border-box;"></div>
<div style="position:absolute;left:677.00px;top:367.20px;width:320.50px;height:172.80px;border:1px solid #dcdcdc;box-sizing:border-box;"></div>
<div class="t" style="top:362.99px;font-size:11px;line-height:11px;letter-spacing:-0.1px;left:28.40px;background:#fff;padding:0 2px;margin-left:-2px;">Performance to 1</div>
<div class="t" style="top:362.99px;font-size:11px;line-height:11px;letter-spacing:-0.1px;left:686.00px;background:#fff;padding:0 2px;margin-left:-2px;">Performance to 2</div>
<div class="t" style="top:363.19px;font-size:11px;line-height:11px;letter-spacing:-0.1px;left:357.30px;background:#fff;padding:0 2px;margin-left:-2px;">Operating Conditions</div>
<div class="t" style="top:413.89px;font-size:11px;line-height:11px;letter-spacing:-0.1px;left:357.30px;background:#fff;padding:0 2px;margin-left:-2px;">Link Summary</div>
<div class="t" style="top:384.59px;font-size:11px;line-height:11px;letter-spacing:-0.1px;left:-394.10px;width:600px;text-align:right;">Predicted Receive Power :</div>
<div class="t" style="top:384.59px;font-size:11px;line-height:11px;letter-spacing:-0.1px;left:-299.00px;width:600px;text-align:right;">-49 dBm ± 7 dB</div>
<div style="position:absolute;left:65.60px;top:404.60px;width:231.40px;height:1.00px;background:#b0b0b0"></div>
<div class="t" style="top:415.49px;font-size:11px;line-height:11px;letter-spacing:-0.1px;left:-394.10px;width:600px;text-align:right;">Mean IP Predicted :</div>
<div class="t" style="top:415.49px;font-size:11px;line-height:11px;letter-spacing:-0.1px;left:-330.00px;width:600px;text-align:right;">149.07</div>
<div class="t" style="top:415.49px;font-size:11px;line-height:11px;letter-spacing:-0.1px;left:273.80px;">Mbps</div>
<div class="t" style="top:438.99px;font-size:11px;line-height:11px;letter-spacing:-0.1px;left:-394.10px;width:600px;text-align:right;">Mean IP Required :</div>
<div style="position:absolute;left:210.90px;top:434.40px;width:58.70px;height:21.00px;border:1px solid #7a7a7a;box-sizing:border-box;background:#fff"></div>
<div class="t" style="top:438.99px;font-size:11px;line-height:11px;letter-spacing:-0.1px;left:-335.20px;width:600px;text-align:right;">5.0</div>
<div class="t" style="top:438.99px;font-size:11px;line-height:11px;letter-spacing:-0.1px;left:273.80px;">Mbps</div>
<div class="t" style="top:463.19px;font-size:11px;line-height:11px;letter-spacing:-0.1px;left:-394.10px;width:600px;text-align:right;">% of Required IP :</div>
<div class="t" style="top:463.19px;font-size:11px;line-height:11px;letter-spacing:-0.1px;left:-330.00px;width:600px;text-align:right;">2981</div>
<div class="t" style="top:463.19px;font-size:11px;line-height:11px;letter-spacing:-0.1px;left:273.80px;">%</div>
<div style="position:absolute;left:65.60px;top:482.80px;width:231.40px;height:1.00px;background:#b0b0b0"></div>
<div class="t" style="top:494.49px;font-size:11px;line-height:11px;letter-spacing:-0.1px;left:-394.10px;width:600px;text-align:right;">Min IP Required :</div>
<div class="t" style="top:494.49px;font-size:11px;line-height:11px;letter-spacing:-0.1px;left:-330.00px;width:600px;text-align:right;">2.0</div>
<div class="t" style="top:494.49px;font-size:11px;line-height:11px;letter-spacing:-0.1px;left:273.80px;">Mbps</div>
<div class="t" style="top:514.79px;font-size:11px;line-height:11px;letter-spacing:-0.1px;left:-394.10px;width:600px;text-align:right;">Min IP Availability Predicted :</div>
<div class="t" style="top:514.79px;font-size:11px;line-height:11px;letter-spacing:-0.1px;left:-330.00px;width:600px;text-align:right;">100.0000</div>
<div class="t" style="top:514.79px;font-size:11px;line-height:11px;letter-spacing:-0.1px;left:273.80px;">%</div>
<div class="t" style="top:384.59px;font-size:11px;line-height:11px;letter-spacing:-0.1px;left:262.90px;width:600px;text-align:right;">Predicted Receive Power :</div>
<div class="t" style="top:384.59px;font-size:11px;line-height:11px;letter-spacing:-0.1px;left:358.00px;width:600px;text-align:right;">-49 dBm ± 7 dB</div>
<div style="position:absolute;left:722.60px;top:404.60px;width:231.40px;height:1.00px;background:#b0b0b0"></div>
<div class="t" style="top:415.49px;font-size:11px;line-height:11px;letter-spacing:-0.1px;left:262.90px;width:600px;text-align:right;">Mean IP Predicted :</div>
<div class="t" style="top:415.49px;font-size:11px;line-height:11px;letter-spacing:-0.1px;left:327.00px;width:600px;text-align:right;">501.43</div>
<div class="t" style="top:415.49px;font-size:11px;line-height:11px;letter-spacing:-0.1px;left:930.80px;">Mbps</div>
<div class="t" style="top:438.99px;font-size:11px;line-height:11px;letter-spacing:-0.1px;left:262.90px;width:600px;text-align:right;">Mean IP Required :</div>
<div style="position:absolute;left:867.90px;top:434.40px;width:58.70px;height:21.00px;border:1px solid #7a7a7a;box-sizing:border-box;background:#fff"></div>
<div class="t" style="top:438.99px;font-size:11px;line-height:11px;letter-spacing:-0.1px;left:321.80px;width:600px;text-align:right;">5.0</div>
<div class="t" style="top:438.99px;font-size:11px;line-height:11px;letter-spacing:-0.1px;left:930.80px;">Mbps</div>
<div class="t" style="top:463.19px;font-size:11px;line-height:11px;letter-spacing:-0.1px;left:262.90px;width:600px;text-align:right;">% of Required IP :</div>
<div class="t" style="top:463.19px;font-size:11px;line-height:11px;letter-spacing:-0.1px;left:327.00px;width:600px;text-align:right;">10029</div>
<div class="t" style="top:463.19px;font-size:11px;line-height:11px;letter-spacing:-0.1px;left:930.80px;">%</div>
<div style="position:absolute;left:722.60px;top:482.80px;width:231.40px;height:1.00px;background:#b0b0b0"></div>
<div class="t" style="top:494.49px;font-size:11px;line-height:11px;letter-spacing:-0.1px;left:262.90px;width:600px;text-align:right;">Min IP Required :</div>
<div class="t" style="top:494.49px;font-size:11px;line-height:11px;letter-spacing:-0.1px;left:327.00px;width:600px;text-align:right;">2.0</div>
<div class="t" style="top:494.49px;font-size:11px;line-height:11px;letter-spacing:-0.1px;left:930.80px;">Mbps</div>
<div class="t" style="top:514.79px;font-size:11px;line-height:11px;letter-spacing:-0.1px;left:262.90px;width:600px;text-align:right;">Min IP Availability Predicted :</div>
<div class="t" style="top:514.79px;font-size:11px;line-height:11px;letter-spacing:-0.1px;left:327.00px;width:600px;text-align:right;">100.0000</div>
<div class="t" style="top:514.79px;font-size:11px;line-height:11px;letter-spacing:-0.1px;left:930.80px;">%</div>
<div class="t" style="top:387.49px;font-size:11px;line-height:11px;letter-spacing:-0.1px;left:-114.20px;width:600px;text-align:right;">Frame Size :</div>
<div style="position:absolute;left:490.20px;top:382.30px;width:71.40px;height:21.60px;border:1px solid #bdbdbd;box-sizing:border-box;background:#e3e3e3"></div>
<div class="t" style="top:388.69px;font-size:11px;line-height:11px;letter-spacing:-0.1px;left:494.50px;">1518</div>
<svg width="10" height="7" viewBox="0 0 10 7" style="position:absolute;left:547.8px;top:389.6px"><path d="M1,1.5 L5,5.5 L9,1.5" fill="none" stroke="#404040" stroke-width="1"/></svg>
<div class="t" style="top:387.49px;font-size:11px;line-height:11px;letter-spacing:-0.1px;left:565.60px;">Bytes</div>
<div class="t" style="top:434.67px;font-size:11.5px;line-height:11.5px;font-weight:700;-webkit-text-stroke:0;letter-spacing:-0.2px;left:-61.00px;width:600px;text-align:right;">Aggregate IP Throughput :</div>
<div class="t" style="top:434.67px;font-size:11.5px;line-height:11.5px;font-weight:700;-webkit-text-stroke:0;letter-spacing:-0.2px;left:21.60px;width:600px;text-align:right;">650.50 Mbps</div>
<div class="t" style="top:455.67px;font-size:11.5px;line-height:11.5px;font-weight:700;-webkit-text-stroke:0;letter-spacing:-0.2px;left:402.80px;">Lowest Mode Availability : 100.0000 %</div>
<div style="position:absolute;left:402.80px;top:475.50px;width:214.20px;height:1.00px;background:#b0b0b0"></div>
<div class="t" style="top:486.59px;font-size:11px;line-height:11px;letter-spacing:-0.1px;left:-61.70px;width:600px;text-align:right;">System Gain Margin :</div>
<div class="t" style="top:486.59px;font-size:11px;line-height:11px;letter-spacing:-0.1px;left:6.50px;width:600px;text-align:right;">33.62 dB</div>
<div class="t" style="top:507.59px;font-size:11px;line-height:11px;letter-spacing:-0.1px;left:-61.70px;width:600px;text-align:right;">Free Space Path Loss :</div>
<div class="t" style="top:507.59px;font-size:11px;line-height:11px;letter-spacing:-0.1px;left:6.50px;width:600px;text-align:right;">130.68 dB</div>
</body></html>
